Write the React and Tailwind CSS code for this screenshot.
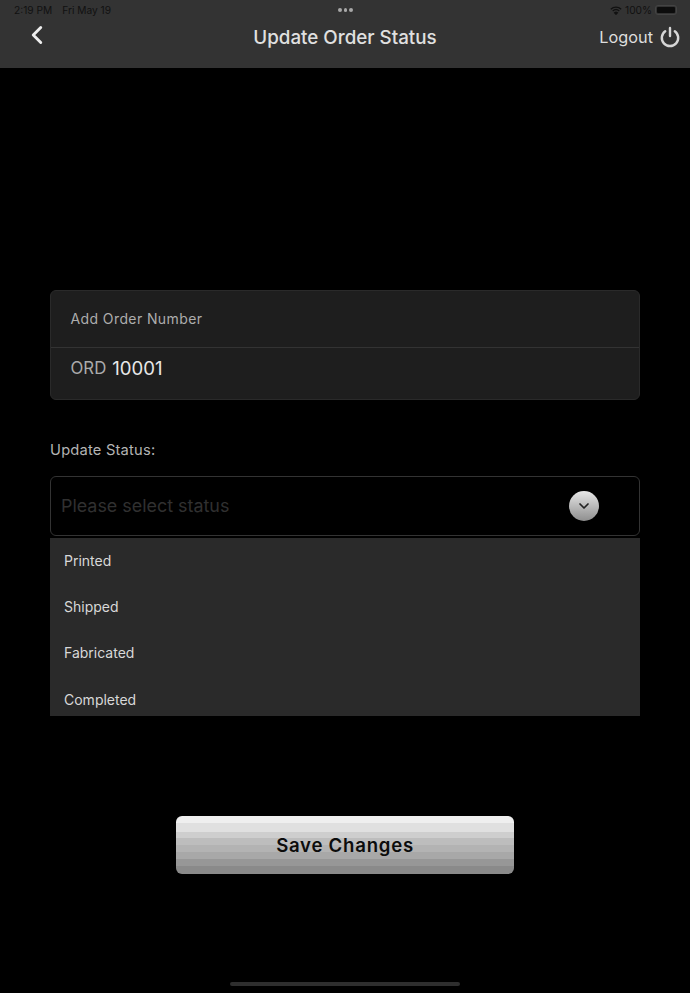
import { ChevronDown, ChevronLeft } from "lucide-react";

const statusOptions = ["Printed", "Shipped", "Fabricated", "Completed"];

const App = () => {
    return (
        <div className="w-[690px] h-[993px] bg-black flex flex-col font-['Inter',sans-serif] overflow-hidden">
            {/* header with ipad status bar */}
            <div className="h-[68px] shrink-0 bg-[#333333] flex flex-col">
                <div className="h-5 pl-[14px] pr-[13px] grid grid-cols-3 items-center text-[10.2px] leading-[14px] text-[#111111]">
                    <div className="flex gap-[10px]">
                        <span>2:19 PM</span>
                        <span>Fri May 19</span>
                    </div>
                    <div className="flex justify-center gap-[2px]">
                        <span className="w-[3.5px] h-[3.5px] rounded-full bg-[#a8a8a8]"></span>
                        <span className="w-[3.5px] h-[3.5px] rounded-full bg-[#a8a8a8]"></span>
                        <span className="w-[3.5px] h-[3.5px] rounded-full bg-[#a8a8a8]"></span>
                    </div>
                    <div className="flex justify-end items-center gap-[3px]">
                        <svg width="12" height="9" viewBox="0 0 12 9" fill="none" stroke="#111111" strokeWidth="1.3">
                            <path d="M0.8 3.2 C3.8 0.4 8.2 0.4 11.2 3.2" />
                            <path d="M2.7 5 C4.6 3.3 7.4 3.3 9.3 5" />
                            <path d="M4.6 6.8 C5.4 6.1 6.6 6.1 7.4 6.8 L6 8.2 Z" fill="#111111" />
                        </svg>
                        <span>100%</span>
                        <div className="w-[22px] h-[10px] rounded-[3px] border border-[#444444] p-[1px] flex">
                            <div className="flex-1 bg-[#0c0c0c] rounded-[1px]"></div>
                        </div>
                    </div>
                </div>
                <div className="flex-1 relative flex items-center justify-center pb-[13px]">
                    <ChevronLeft size={30} strokeWidth={2.3} className="absolute left-[22px] top-0 text-[#eeeeee]" />
                    <h1 className="text-[18.8px] leading-6 font-[550] text-[#e0e0e0]">Update Order Status</h1>
                    <div className="absolute right-[9px] top-[5px] flex items-center gap-[6px]">
                        <span className="text-[16.3px] leading-6 text-[#dedede]">Logout</span>
                        <svg width="22" height="22" viewBox="0 0 22 22" fill="none" stroke="#d6d6d6" strokeWidth="2.4" strokeLinecap="round">
                            <path d="M11 2 V10" />
                            <path d="M6.2 5.2 A8.2 8.2 0 1 0 15.8 5.2" />
                        </svg>
                    </div>
                </div>
            </div>

            <div className="flex-1 flex flex-col px-[50px] pt-[222px]">
                {/* order number card */}
                <div className="h-[110px] rounded-md bg-[#1e1e1e] border border-[#2a2a2a] flex flex-col">
                    <div className="h-[57px] px-[19.5px] pb-[2px] flex items-center text-[14px] tracking-[0.4px] text-[#adadad] border-b border-[#333333]">
                        Add Order Number
                    </div>
                    <div className="flex-1 px-[19.5px] pb-[9px] flex items-center gap-[6px]">
                        <span className="text-[16.8px] text-[#ababab]">ORD</span>
                        <span className="text-[18.6px] text-[#e8e8e8]">10001</span>
                    </div>
                </div>

                <p className="mt-[40px] text-[14.7px] leading-5 tracking-[0.2px] text-[#b4b4b4]">Update Status:</p>

                {/* status select */}
                <div className="mt-4 h-[60px] rounded-md border border-[#333333] pl-[10px] pr-[40px] flex items-center justify-between">
                    <span className="text-[17.9px] text-[#303030]">Please select status</span>
                    <div className="w-[30px] h-[30px] rounded-full bg-gradient-to-b from-[#e8e8e8] to-[#8f8f8f] flex items-center justify-center">
                        <ChevronDown size={16} strokeWidth={2.6} className="text-[#222222]" />
                    </div>
                </div>
                <div className="mt-[2px] h-[178px] bg-[#2a2a2a] overflow-hidden">
                    {statusOptions.map((option, i) => (
                        <div key={i} className="h-[46.4px] pl-[14px] pb-[2px] flex items-center text-[14px] text-[#d8d8d8]">{option}</div>
                    ))}
                </div>

                <button className="mt-[100px] self-center w-[338px] h-[58px] pt-[1px] rounded-md bg-[linear-gradient(to_bottom,#efefef_0%,#efefef_12%,#e0e0e0_12%,#e0e0e0_27%,#cecece_27%,#cecece_38%,#bdbdbd_38%,#bdbdbd_50%,#b3b3b3_50%,#b3b3b3_62%,#a8a8a8_62%,#a8a8a8_75%,#979797_75%,#979797_87%,#8a8a8a_87%,#8a8a8a_100%)] text-[18.6px] font-semibold tracking-[0.75px] text-[#0c0c0c]">
                    Save Changes
                </button>
            </div>

            {/* home indicator */}
            <div className="h-[11px] shrink-0 flex justify-center">
                <div className="w-[230px] h-1 rounded-full bg-[#2e2e2e]"></div>
            </div>
        </div>
    );
};

export default App;
